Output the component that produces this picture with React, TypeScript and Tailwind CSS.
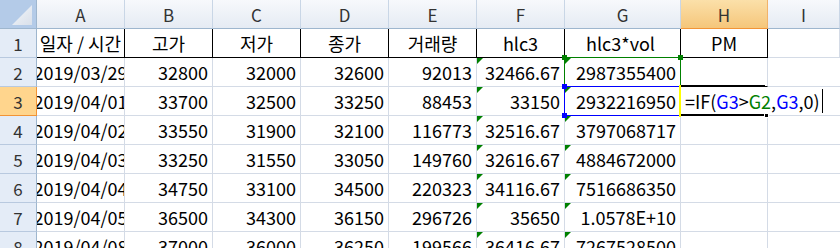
import React from "react";

const cols = ["A", "B", "C", "D", "E", "F", "G", "H", "I"];

const head = ["일자 / 시간", "고가", "저가", "종가", "거래량", "hlc3", "hlc3*vol", "PM"];

const rows: string[][] = [
  ["2019/03/29", "32800", "32000", "32600", "92013", "32466.67", "2987355400"],
  ["2019/04/01", "33700", "32500", "33250", "88453", "33150", "2932216950"],
  ["2019/04/02", "33550", "31900", "32100", "116773", "32516.67", "3797068717"],
  ["2019/04/03", "33250", "31550", "33050", "149760", "32616.67", "4884672000"],
  ["2019/04/04", "34750", "33100", "34500", "220323", "34116.67", "7516686350"],
  ["2019/04/05", "36500", "34300", "36150", "296726", "35650", "1.0578E+10"],
  ["2019/04/08", "37000", "36000", "36250", "199566", "36416.67", "7267528500"],
];

function Flag() {
  return <span className="absolute left-0 top-0 h-0 w-0 border-r-[6px] border-t-[6px] border-r-transparent border-t-[#008000]" />;
}

export default function App() {
  return (
    <div
      className="relative h-[248px] w-[840px] overflow-hidden bg-white text-[18px] leading-none text-black"
      style={{ fontFamily: '"Noto Sans CJK KR", "Noto Sans", sans-serif' }}
    >
      <div className="grid grid-cols-[37px_88px_88px_88px_88px_88px_88px_116px_87px_1fr] auto-rows-[29px]">
        {/* corner */}
        <div className="relative border-b border-r border-[#9eb6ce] bg-[#b4cbe8]">
          <svg width="36" height="28" className="absolute left-0 top-0">
            <defs>
              <linearGradient id="tri" x1="0" y1="0" x2="1" y2="1">
                <stop offset="0" stopColor="#f4f6fa" />
                <stop offset="1" stopColor="#d9e0ea" />
              </linearGradient>
            </defs>
            <polygon points="12,25 32,25 32,5" fill="url(#tri)" />
          </svg>
        </div>
        {cols.map((c) => (
          <div
            key={c}
            className={
              c === "H"
                ? "flex items-center justify-center border-b border-r border-b-[#f29436] border-r-[#f1b36b] bg-linear-to-b from-[#fbe0a9] to-[#f5c67a] text-[17px] text-[#333]"
                : "flex items-center justify-center border-b border-r border-b-[#9eb6ce] border-r-[#c9d6e6] bg-linear-to-b from-[#f7f9fc] to-[#e5ebf3] text-[17px] text-[#333]"
            }
          >
            {c}
          </div>
        ))}

        {/* row 1 */}
        <div className="flex items-center justify-center border-b border-r border-b-[#b8c9df] border-r-[#9eb6ce] bg-[#e4ecf7] text-[17px] text-[#333]">
          1
        </div>
        {head.map((h, i) => (
          <div
            key={h}
            className={
              "flex items-center justify-center overflow-hidden whitespace-nowrap border-b border-r border-black" +
              (i === 6 ? " pr-1" : "")
            }
          >
            {h}
          </div>
        ))}
        <div className="border-b border-r border-[#d4dbe6]" />

        {rows.map((r, ri) => {
          const n = ri + 2;
          const active = n === 3;
          return (
            <React.Fragment key={n}>
              <div
                className={
                  active
                    ? "flex items-center justify-center border-b border-r border-[#f29436] bg-[#ffd58d] text-[17px] text-[#333]"
                    : "flex items-center justify-center border-b border-r border-b-[#b8c9df] border-r-[#9eb6ce] bg-[#e4ecf7] text-[17px] text-[#333]"
                }
              >
                {n}
              </div>
              <div className="flex items-center justify-center overflow-hidden whitespace-nowrap border-b border-r border-[#d4dbe6]">
                {r[0]}
              </div>
              {r.slice(1).map((v, ci) => (
                <div
                  key={ci}
                  className="relative flex items-center justify-end overflow-hidden whitespace-nowrap border-b border-r border-[#d4dbe6] pr-[4px]"
                >
                  {ci >= 4 && <Flag />}
                  {v}
                </div>
              ))}
              <div
                className={
                  active
                    ? "flex items-center overflow-visible whitespace-nowrap border-b border-[#d4dbe6] pl-[4px]"
                    : n === 2
                      ? "border-b border-r border-b-black border-r-[#d4dbe6]"
                      : "border-b border-r border-[#d4dbe6]"
                }
              >
                {active && (
                  <span className="relative z-10 flex items-center">
                    =IF(<span className="text-[#0000ff]">G3</span>&gt;<span className="text-[#008000]">G2</span>,
                    <span className="text-[#0000ff]">G3</span>,0)
                    <span className="ml-[2px] inline-block h-[24px] w-px bg-black" />
                  </span>
                )}
              </div>
              <div className="border-b border-[#d4dbe6]" />
            </React.Fragment>
          );
        })}
      </div>

      {/* formula reference boxes */}
      <div className="absolute left-[564px] top-[57px] h-[30px] w-[117px] border border-[#008000]" />
      <span className="absolute left-[562px] top-[55px] h-[5px] w-[5px] bg-[#008000]" />
      <span className="absolute left-[678px] top-[55px] h-[5px] w-[5px] bg-[#008000]" />
      <div className="absolute left-[564px] top-[86px] h-[30px] w-[117px] border border-[#0000ff]" />
      <span className="absolute left-[562px] top-[84px] h-[5px] w-[5px] bg-[#0000ff]" />
      <span className="absolute left-[562px] top-[113px] h-[5px] w-[5px] bg-[#0000ff]" />

      {/* active cell H3 */}
      <div className="absolute left-[679px] top-[85px] h-[32px] w-[2px] bg-[#ffff00]" />
      <div className="absolute left-[681px] top-[85px] h-[2px] w-[84px] bg-black" />
      <div className="absolute left-[681px] top-[114px] h-[2px] w-[84px] bg-black" />
      <span className="absolute left-[764px] top-[113px] h-[5px] w-[5px] border border-white bg-black" />
    </div>
  );
}
